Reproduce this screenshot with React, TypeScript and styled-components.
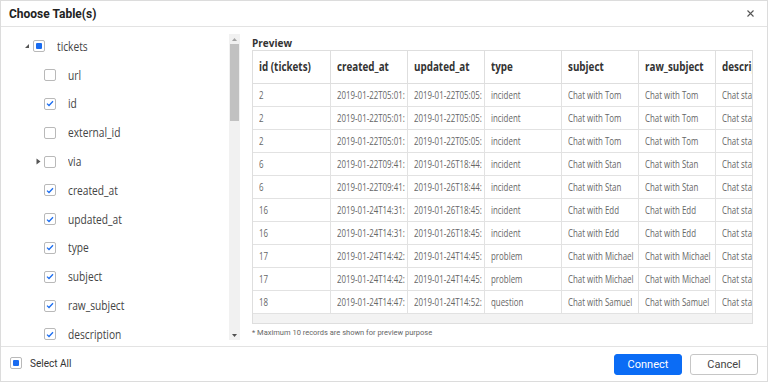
import { createGlobalStyle } from "styled-components";
import styled from "styled-components";

const GlobalStyle = createGlobalStyle`
	html, body {
		margin: 0;
		padding: 0;
		background: #ffffff;
		font-family: Roboto, "Liberation Sans", sans-serif;
	}
	* { box-sizing: border-box; }
`;

type Field = { name: string; checked: boolean; expandable?: boolean };

const fields: Field[] = [
	{ name: "url", checked: false },
	{ name: "id", checked: true },
	{ name: "external_id", checked: false },
	{ name: "via", checked: false, expandable: true },
	{ name: "created_at", checked: true },
	{ name: "updated_at", checked: true },
	{ name: "type", checked: true },
	{ name: "subject", checked: true },
	{ name: "raw_subject", checked: true },
	{ name: "description", checked: true },
];

const columns = ["id (tickets)", "created_at", "updated_at", "type", "subject", "raw_subject", "description"];

const rows: string[][] = [
	["2", "2019-01-22T05:01:", "2019-01-22T05:05:", "incident", "Chat with Tom", "Chat with Tom", "Chat started"],
	["2", "2019-01-22T05:01:", "2019-01-22T05:05:", "incident", "Chat with Tom", "Chat with Tom", "Chat started"],
	["2", "2019-01-22T05:01:", "2019-01-22T05:05:", "incident", "Chat with Tom", "Chat with Tom", "Chat started"],
	["6", "2019-01-22T09:41:", "2019-01-26T18:44:", "incident", "Chat with Stan", "Chat with Stan", "Chat started"],
	["6", "2019-01-22T09:41:", "2019-01-26T18:44:", "incident", "Chat with Stan", "Chat with Stan", "Chat started"],
	["16", "2019-01-24T14:31:", "2019-01-26T18:45:", "incident", "Chat with Edd", "Chat with Edd", "Chat started"],
	["16", "2019-01-24T14:31:", "2019-01-26T18:45:", "incident", "Chat with Edd", "Chat with Edd", "Chat started"],
	["17", "2019-01-24T14:42:", "2019-01-24T14:45:", "problem", "Chat with Michael", "Chat with Michael", "Chat started"],
	["17", "2019-01-24T14:42:", "2019-01-24T14:45:", "problem", "Chat with Michael", "Chat with Michael", "Chat started"],
	["18", "2019-01-24T14:47:", "2019-01-24T14:52:", "question", "Chat with Samuel", "Chat with Samuel", "Chat started"],
];

const Dialog = styled.div`
	width: 768px;
	height: 382px;
	display: flex;
	flex-direction: column;
	border: 1px solid #dcdcdc;
	background: #fff;
`;

const Header = styled.div`
	height: 26px;
	flex-shrink: 0;
	display: flex;
	align-items: center;
	justify-content: space-between;
	padding: 0 13px 0 8px;
	border-bottom: 1px solid #e3e3e3;
	font-size: 12px;
	font-weight: 700;
	color: #222;
`;

const CloseButton = styled.button`
	border: none;
	background: none;
	padding: 0;
	display: flex;
	cursor: pointer;
`;

const Body = styled.div`
	flex: 1;
	display: flex;
	min-height: 0;
	border-bottom: 1px solid #e3e3e3;
`;

const TreePane = styled.div`
	width: 239px;
	flex-shrink: 0;
	display: flex;
	padding-top: 7px;
`;

const TreeList = styled.div`
	flex: 1;
	overflow: hidden;
	margin-top: -2px;
	font-family: "Open Sans", "Noto Sans", sans-serif;
	font-size: 12px;
	color: #444;
`;

const TreeRow = styled.div<{ $level: number }>`
	height: 28.8px;
	display: flex;
	align-items: center;
	padding-left: ${(p) => (p.$level === 0 ? 20 : 31)}px;
`;

const Toggle = styled.span`
	width: 12px;
	display: flex;
	align-items: center;
	justify-content: center;
`;

const Box = styled.span`
	width: 12px;
	height: 12px;
	border: 1px solid #b9b9b9;
	border-radius: 2px;
	background: #fff;
	display: flex;
	align-items: center;
	justify-content: center;
	flex-shrink: 0;
`;

const Partial = styled.span`
	width: 6px;
	height: 6px;
	background: #1a6cf0;
	border-radius: 1px;
`;

// Segoe-like text in the reference is narrower than any installed family
const Squeeze = styled.span<{ $scale: number }>`
	display: inline-block;
	white-space: nowrap;
	transform: scaleX(${(p) => p.$scale});
	transform-origin: left center;
`;

const Label = styled(Squeeze)`
	margin-left: 12px;
`;

const ScrollTrack = styled.div`
	width: 11px;
	margin: 0 0 6px;
	background: #f1f1f1;
	display: flex;
	flex-direction: column;
	align-items: center;
`;

const ScrollArrow = styled.div`
	height: 10px;
	display: flex;
	align-items: center;
	justify-content: center;
`;

const ScrollThumb = styled.div<{ $size: number }>`
	width: 9px;
	height: ${(p) => p.$size}px;
	background: #c1c1c1;
`;

const PreviewPane = styled.div`
	flex: 1;
	padding: 9px 15px 0 12px;
	display: flex;
	flex-direction: column;
`;

const PreviewTitle = styled.div`
	font-family: "Open Sans", "Noto Sans", sans-serif;
	font-size: 10px;
	font-weight: 700;
	color: #333;
	height: 14px;
	line-height: 14px;
`;

const TableBox = styled.div`
	border: 1px solid #dedede;
	overflow: hidden;
	width: 501px;
`;

const Table = styled.table`
	border-collapse: collapse;
	table-layout: fixed;
	width: 539px;
	font-family: "Open Sans", "Noto Sans", sans-serif;
`;

const Th = styled.th`
	width: 77px;
	height: 32px;
	padding: 0 6px;
	text-align: left;
	font-size: 12px;
	font-weight: 700;
	color: #333;
	border-right: 1px solid #dedede;
	border-bottom: 1px solid #dedede;
	white-space: nowrap;
	overflow: hidden;
`;

const Td = styled.td`
	height: 23px;
	padding: 0 6px;
	font-size: 10px;
	color: #666;
	border-right: 1px solid #e2e2e2;
	border-bottom: 1px solid #e2e2e2;
	white-space: nowrap;
	overflow: hidden;
`;

const HScroll = styled.div`
	height: 9px;
	background: #f3f3f3;
`;

const Note = styled.div`
	margin-top: 4px;
	font-size: 7.5px;
	color: #666;
`;

const Footer = styled.div`
	height: 34px;
	flex-shrink: 0;
	display: flex;
	align-items: center;
	padding: 0 9px 0 9px;
`;

const SelectAll = styled.label`
	display: flex;
	align-items: center;
	gap: 8px;
	font-size: 10px;
	color: #333;
	margin-top: -2px;
`;

const Buttons = styled.div`
	margin-left: auto;
	display: flex;
	gap: 8px;
`;

const Button = styled.button<{ $primary?: boolean }>`
	width: 68px;
	height: 21px;
	border-radius: 3px;
	font-family: Roboto, "Liberation Sans", sans-serif;
	font-size: 11px;
	cursor: pointer;
	border: 1px solid ${(p) => (p.$primary ? "#0b6cf5" : "#c6c6c6")};
	background: ${(p) => (p.$primary ? "#0b6cf5" : "#fff")};
	color: ${(p) => (p.$primary ? "#fff" : "#444")};
`;

const Check = () => (
	<svg width="8" height="7" viewBox="0 0 8 7">
		<path d="M1 3.6 L3 5.5 L7 1.2" fill="none" stroke="#1a6cf0" strokeWidth="1.3" />
	</svg>
);

const Checkbox = ({ state }: { state: "on" | "off" | "partial" }) => (
	<Box>
		{state === "on" ? <Check /> : null}
		{state === "partial" ? <Partial /> : null}
	</Box>
);

const Caret = ({ open }: { open: boolean }) =>
	open ? (
		<svg width="6" height="6" viewBox="0 0 6 6">
			<path d="M5 1 L5 5 L1 5 Z" fill="#555" />
		</svg>
	) : (
		<svg width="5" height="7" viewBox="0 0 5 7">
			<path d="M0.5 0.5 L4.5 3.5 L0.5 6.5 Z" fill="#555" />
		</svg>
	);

const App = () => {
	return (
		<>
			<GlobalStyle />
			<Dialog>
				<Header>
					<span>Choose Table(s)</span>
					<CloseButton aria-label="Close">
						<svg width="7" height="7" viewBox="0 0 7 7">
							<path d="M0.5 0.5 L6.5 6.5 M6.5 0.5 L0.5 6.5" stroke="#555" strokeWidth="1.1" />
						</svg>
					</CloseButton>
				</Header>
				<Body>
					<TreePane>
						<TreeList>
							<TreeRow $level={0}>
								<Toggle>
									<Caret open />
								</Toggle>
								<Checkbox state="partial" />
								<Label $scale={0.85}>tickets</Label>
							</TreeRow>
							{fields.map((f) => (
								<TreeRow $level={1} key={f.name}>
									<Toggle>{f.expandable ? <Caret open={false} /> : null}</Toggle>
									<Checkbox state={f.checked ? "on" : "off"} />
									<Label $scale={0.85}>{f.name}</Label>
								</TreeRow>
							))}
						</TreeList>
						<ScrollTrack>
							<ScrollArrow>
								<svg width="5" height="3" viewBox="0 0 5 3">
									<path d="M0 3 L2.5 0 L5 3 Z" fill="#a3a3a3" />
								</svg>
							</ScrollArrow>
							<ScrollThumb $size={77} />
							<div style={{ flex: 1 }} />
							<ScrollArrow>
								<svg width="5" height="3" viewBox="0 0 5 3">
									<path d="M0 0 L2.5 3 L5 0 Z" fill="#505050" />
								</svg>
							</ScrollArrow>
						</ScrollTrack>
					</TreePane>
					<PreviewPane>
						<PreviewTitle>Preview</PreviewTitle>
						<TableBox>
							<Table>
								<thead>
									<tr>
										{columns.map((c) => (
											<Th key={c}>
												<Squeeze $scale={0.82}>{c}</Squeeze>
											</Th>
										))}
									</tr>
								</thead>
								<tbody>
									{rows.map((r, i) => (
										<tr key={i}>
											{r.map((v, j) => (
												<Td key={j}>
													<Squeeze $scale={0.79}>{v}</Squeeze>
												</Td>
											))}
										</tr>
									))}
								</tbody>
							</Table>
							<HScroll />
						</TableBox>
						<Note>* Maximum 10 records are shown for preview purpose</Note>
					</PreviewPane>
				</Body>
				<Footer>
					<SelectAll>
						<Checkbox state="partial" />
						Select All
					</SelectAll>
					<Buttons>
						<Button $primary>Connect</Button>
						<Button>Cancel</Button>
					</Buttons>
				</Footer>
			</Dialog>
		</>
	);
};

export default App;
